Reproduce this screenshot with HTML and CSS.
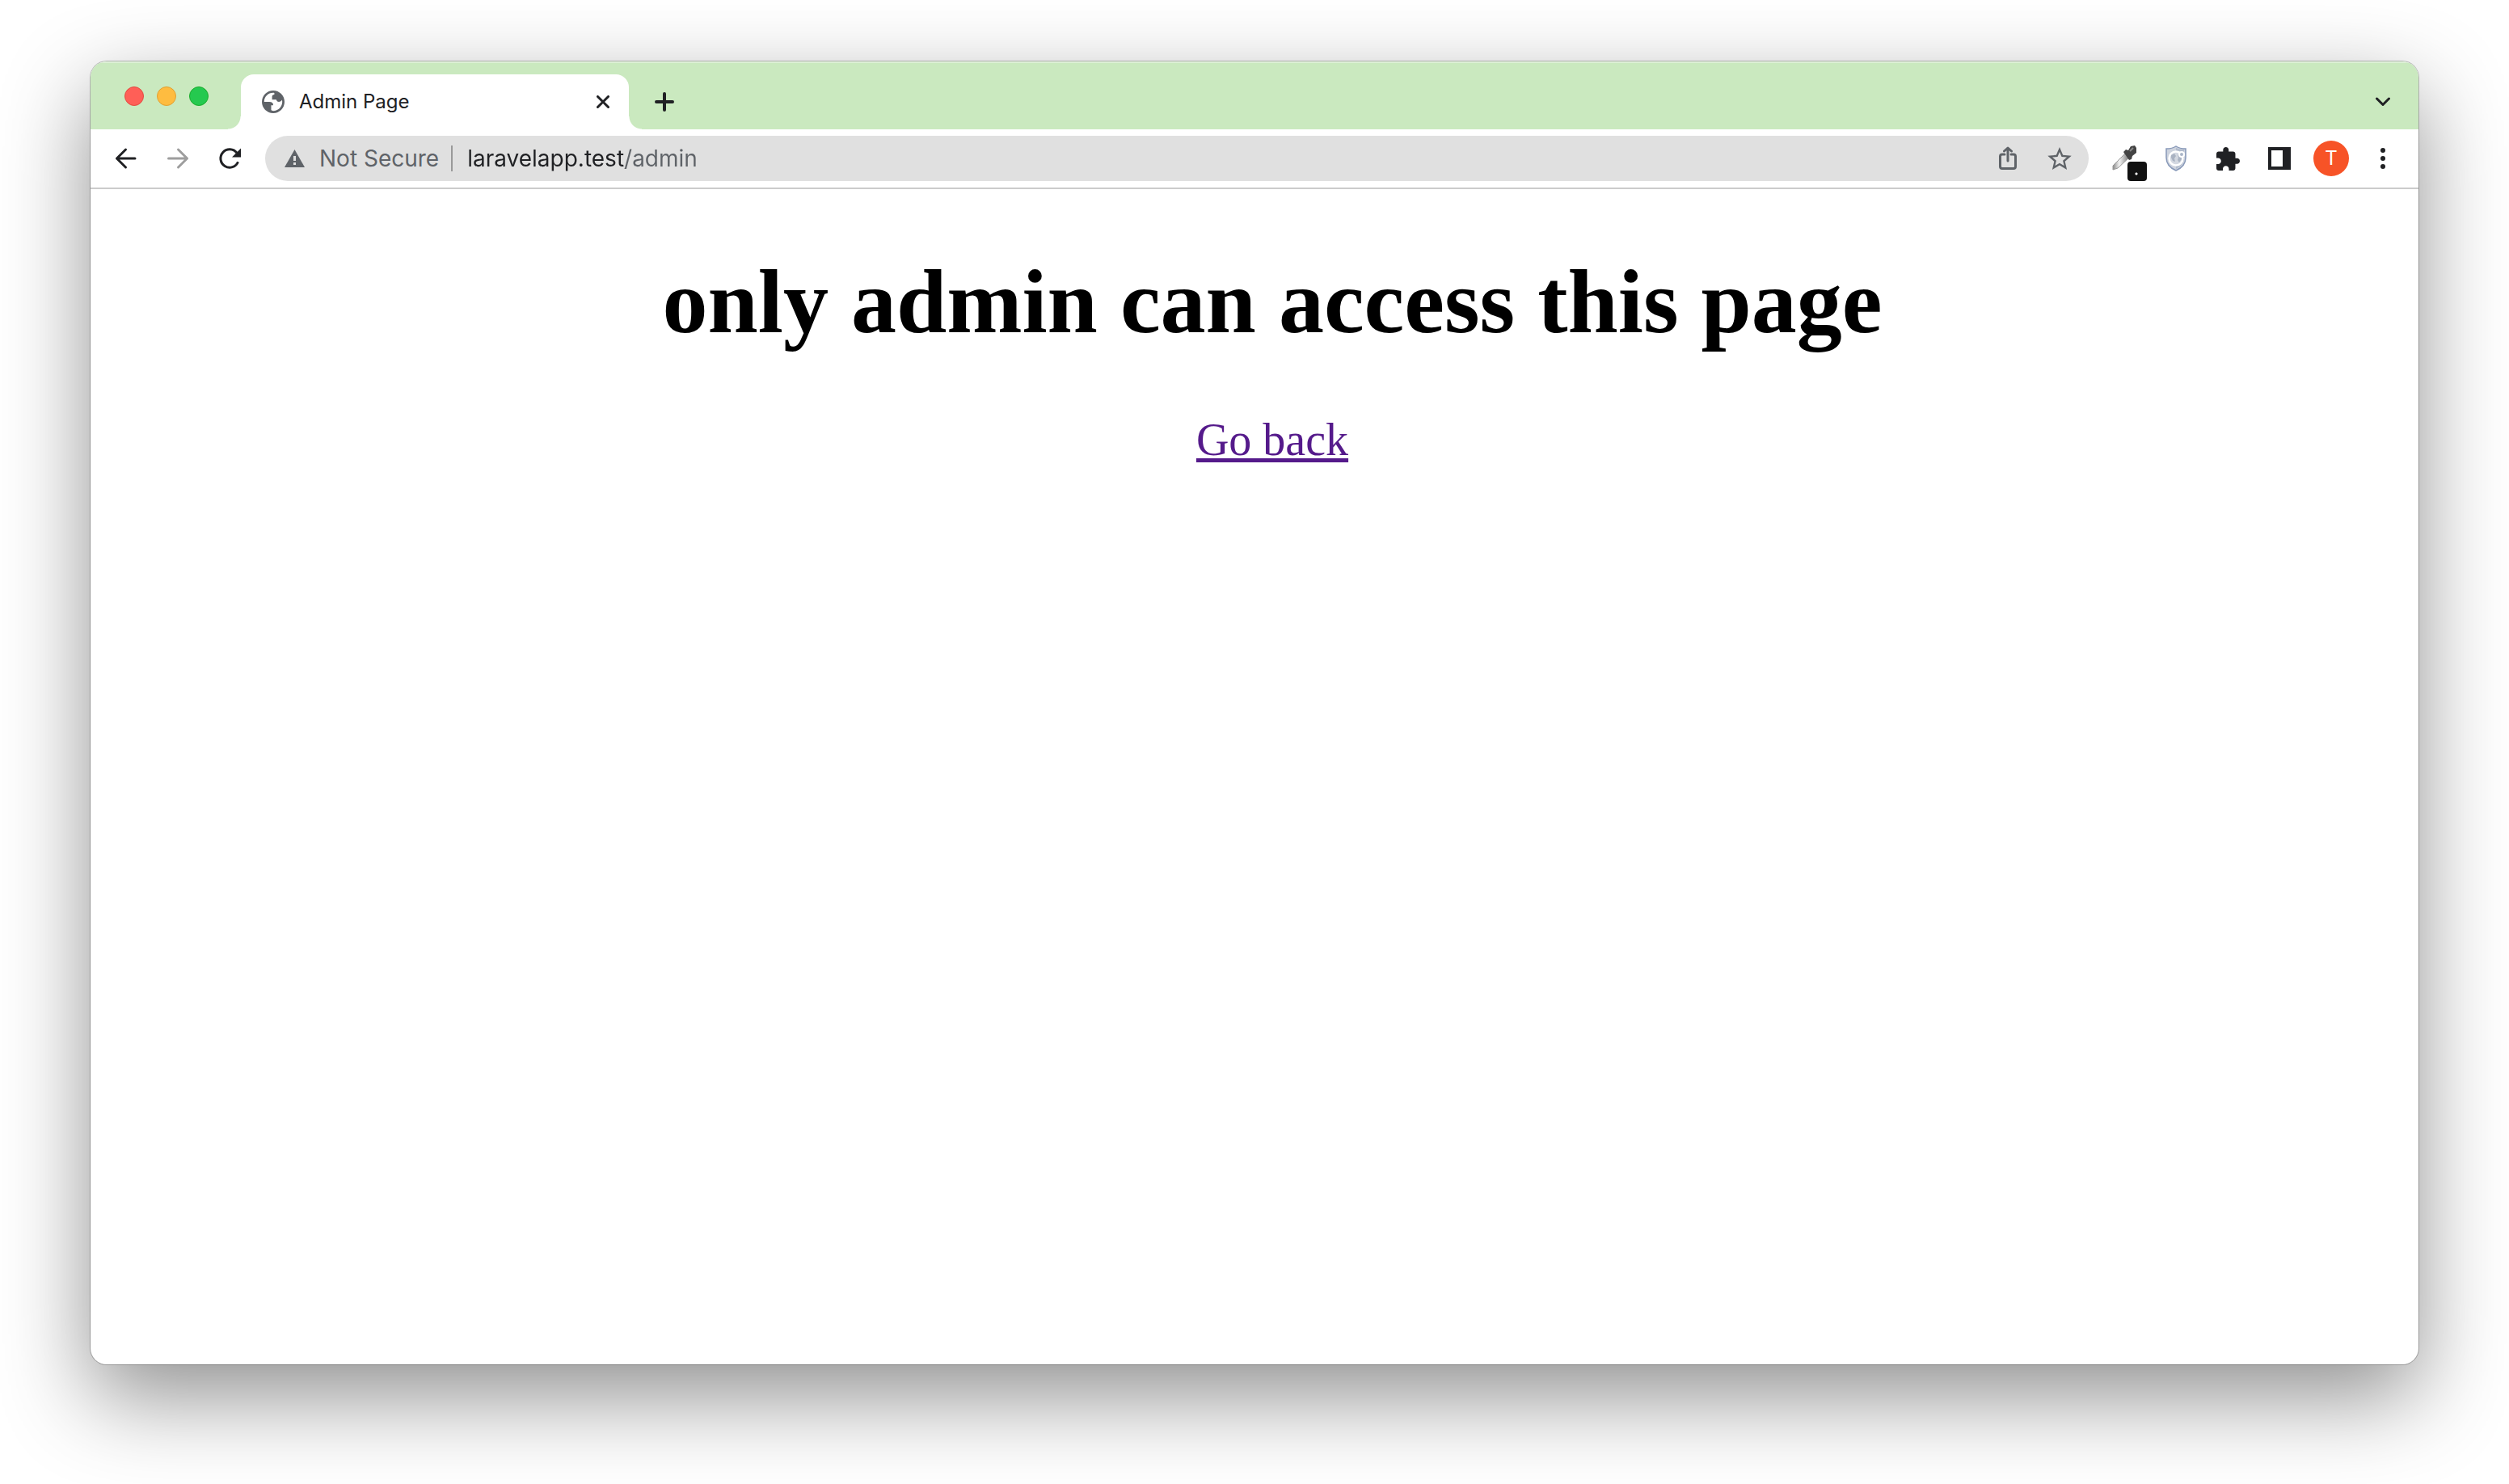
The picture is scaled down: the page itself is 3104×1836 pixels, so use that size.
FILE: index.html
```html
<!DOCTYPE html>
<html lang="en">
<head>
<meta charset="utf-8">
<title>Admin Page</title>
<link rel="stylesheet" href="styles.css">
</head>
<body>
<div class="window">
  <header class="tab-strip">
    <div class="lights">
      <button class="light light-close" aria-label="Close window"></button>
      <button class="light light-min" aria-label="Minimise window"></button>
      <button class="light light-max" aria-label="Maximise window"></button>
    </div>
    <div class="tab">
      <svg class="tab-globe" viewBox="2 2 20 20" width="28" height="28" aria-hidden="true"><path fill="#5f6368" d="M12 2C6.480 2 2 6.480 2 12s4.480 10 10 10 10-4.480 10-10S17.520 2 12 2z"/><path fill="#fff" d="M4 12h4.500c2.500 0 3.700 1.200 3.500 3h-1.800v4.300c.5.300 1.100.5 1.800.7 4.400 0 8-3.600 8-8 0-.6-.1-1.200-.2-1.700-.5 1.100-1.600 1.700-2.800 1.700-1.300 0-2-.7-2.300-1.900H11V7.500c0-1.100.7-1.900 2-1.900V4.100C8.300 3.500 4 7 4 12z"/></svg>
      <span class="tab-title">Admin Page</span>
      <button class="icon-button tab-close" aria-label="Close tab"><svg viewBox="0 0 16 16" width="16" height="16"><path class="stroke" stroke-width="3" d="M1.500 1.500l13 13M14.500 1.500l-13 13"/></svg></button>
    </div>
    <button class="icon-button new-tab" aria-label="New tab"><svg viewBox="0 0 24 24" width="24" height="24"><path class="stroke" stroke-width="4" d="M12 2v20M2 12h20"/></svg></button>
    <button class="icon-button tab-search" aria-label="Search tabs"><svg viewBox="0 0 20 12" width="20" height="12"><path class="stroke" stroke-width="3" d="M2.500 2l7.500 7.500L17.500 2"/></svg></button>
  </header>

  <nav class="toolbar" aria-label="Navigation">
    <div class="buttons">
      <button class="icon-button" aria-label="Back"><svg viewBox="0 0 28 28" width="28" height="28"><path class="stroke" stroke-width="3" d="M25 14H2.500M13.500 3l-11 11 11 11"/></svg></button>
      <button class="icon-button dim" aria-label="Forward"><svg viewBox="0 0 28 28" width="28" height="28"><path class="stroke" stroke-width="3" d="M2.500 14h23M14.500 3l11 11-11 11"/></svg></button>
      <button class="icon-button" aria-label="Reload"><svg viewBox="0 0 28 28" width="28" height="28"><path class="stroke butt" stroke-width="3" d="M24.500 18.200A11.200 11.200 0 1 1 23 7.200"/><path fill="#202124" d="M28 1.500V12.500H17z"/></svg></button>
    </div>
    <div class="omnibox">
      <svg class="warning" viewBox="0 0 25 22" width="25" height="22" aria-hidden="true"><path fill="#5f6368" d="M12.500 0L25 22H0z"/><path stroke="#e0e0e0" stroke-width="3" d="M12.500 8v6M12.500 16v3"/></svg>
      <span class="security">Not Secure</span>
      <input class="address" type="text" value="laravelapp.test/admin" aria-label="Address" spellcheck="false">
      <button class="icon-button" aria-label="Share"><svg viewBox="0 0 24 30" width="24" height="30"><path class="stroke grey" stroke-width="3" d="M8 10H5a2.500 2.500 0 0 0-2.500 2.500V25A2.500 2.500 0 0 0 5 27.500h14a2.500 2.500 0 0 0 2.500-2.500V12.500A2.500 2.500 0 0 0 19 10h-3M12 18V3M7.500 6L12 2l4.500 4"/></svg></button>
      <button class="icon-button" aria-label="Bookmark"><svg viewBox="2 2 20 19" width="30" height="28"><path fill="#5f6368" d="M22 9.240l-7.190-.62L12 2 9.190 8.630 2 9.240l5.460 4.730L5.820 21 12 17.270 18.180 21l-1.630-7.030L22 9.240zM12 15.400l-3.760 2.270 1-4.280-3.320-2.880 4.380-.38L12 6.100l1.710 4.040 4.380.38-3.320 2.880 1 4.280L12 15.400z"/></svg></button>
    </div>
    <div class="buttons">
      <button class="icon-button picker" aria-label="Colour picker">
        <svg viewBox="0 0 32 32" width="32" height="32"><defs><linearGradient id="glass"><stop offset="0" stop-color="#888"/><stop offset=".4" stop-color="#f4f4f4"/><stop offset="1" stop-color="#777"/></linearGradient></defs><path fill="url(#glass)" stroke="#999" d="M17 10l5 5L8 28l-6 2 0-5z"/><path fill="#444" d="M15 8l3-3 3 1 3-5 5-1 2 3v6l-5 4-1 4-3 1z"/><path stroke="#888" stroke-width="2" d="M23 7l4-4"/></svg>
        <span class="picker-badge"></span>
      </button>
      <button class="icon-button" aria-label="Shield extension"><svg viewBox="0 0 26 32" width="26" height="32"><path fill="#cdd3de" stroke="#8798b8" stroke-width="1.500" d="M13 1c3 2 7 3 12 3v11c0 8-5 13-12 16C6 28 1 23 1 15V4c5 0 9-1 12-3z"/><path fill="#b2bccd" d="M13 3v26c6-3 10-7 10-14V5c-4 0-7-.7-10-2z"/><circle cx="13" cy="16" r="8.500" fill="#d3d8e1" stroke="#fff" stroke-width="2.500"/><path fill="#aab3c2" d="M7 12l4-2 2 3-2 3 1 4-3-1-2-4zM15 11l4 2 1 4-3 4-2-3 1-3z"/><circle cx="20" cy="11" r="3" fill="#aab5c8" stroke="#fff" stroke-width="2"/></svg></button>
      <button class="icon-button" aria-label="Extensions"><svg viewBox="2 1 21 21" width="29" height="29"><path fill="#202124" d="M20.500 11H19V7c0-1.100-.9-2-2-2h-4V3.500C13 2.120 11.880 1 10.500 1S8 2.120 8 3.500V5H4c-1.100 0-1.990.9-1.990 2v3.800H3.500c1.490 0 2.700 1.210 2.700 2.700s-1.210 2.700-2.700 2.700H2V20c0 1.100.9 2 2 2h3.800v-1.500c0-1.490 1.210-2.700 2.700-2.700 1.490 0 2.700 1.210 2.700 2.700V22H17c1.100 0 2-.9 2-2v-4h1.500c1.380 0 2.500-1.120 2.500-2.500S21.880 11 20.500 11z"/></svg></button>
      <button class="icon-button" aria-label="Side panel"><svg viewBox="0 0 28 28" width="28" height="28"><path fill="#202124" fill-rule="evenodd" d="M0 0h28v28H0zM4 4v20h14V4z"/></svg></button>
      <button class="icon-button" aria-label="Profile"><span class="avatar">T</span></button>
      <button class="icon-button" aria-label="Menu"><svg viewBox="0 0 6 26" width="6" height="26"><g fill="#202124"><circle cx="3" cy="3" r="3"/><circle cx="3" cy="13" r="3"/><circle cx="3" cy="23" r="3"/></g></svg></button>
    </div>
  </nav>

  <main class="page">
    <h1 class="page-title">only admin can access this page</h1>
    <p class="page-back"><a class="back-link" href="#">Go back</a></p>
  </main>
</div>
</body>
</html>
```
FILE: styles.css
```css
* {
  box-sizing: border-box;
}

body {
  display: flex;
  min-height: 100vh;
  margin: 0;
  padding: 76px 112px 148px;
  background: #fff;
  font-family: Inter, "Liberation Sans", sans-serif;
  color: #202124;
}

button {
  padding: 0;
  border: 0;
  background: none;
  font: inherit;
  color: inherit;
}

svg {
  display: block;
}

.window {
  display: flex;
  flex: 1;
  flex-direction: column;
  min-width: 0;
  overflow: hidden;
  border-radius: 20px;
  background: #fff;
  box-shadow: 0 0 0 1px rgba(0, 0, 0, 0.24), 0 40px 110px rgba(0, 0, 0, 0.44);
}

/* Tab strip */

.tab-strip {
  display: flex;
  align-items: flex-end;
  height: 84px;
  padding: 0 16px 0 42px;
  background: #cae9bf;
  box-shadow: inset 0 2px 0 rgba(255, 255, 255, 0.35);
}

.lights {
  display: flex;
  gap: 16px;
  margin-right: 40px;
  padding-bottom: 29px;
}

.light {
  width: 24px;
  height: 24px;
  border: 1px solid;
  border-radius: 50%;
}

.light-close {
  border-color: #e24b41;
  background: #ff5f57;
}

.light-min {
  border-color: #e1a032;
  background: #febc40;
}

.light-max {
  border-color: #1bac2c;
  background: #25c94f;
}

.tab {
  position: relative;
  display: flex;
  align-items: center;
  width: 480px;
  height: 68px;
  padding: 0 4px 0 26px;
  border-radius: 16px 16px 0 0;
  background: #fff;
}

/* Curved feet where the tab meets the toolbar */
.tab::before,
.tab::after {
  content: "";
  position: absolute;
  bottom: 0;
  width: 16px;
  height: 16px;
}

.tab::before {
  right: 100%;
  background: radial-gradient(circle at 0 0, transparent 15px, #fff 16px);
}

.tab::after {
  left: 100%;
  background: radial-gradient(circle at 100% 0, transparent 15px, #fff 16px);
}

.tab-title {
  flex: 1;
  padding-left: 18px;
  font-size: 24px;
  line-height: 32px;
}

.icon-button {
  display: flex;
  flex: none;
  align-items: center;
  justify-content: center;
  width: 56px;
  height: 56px;
}

.new-tab,
.tab-search {
  height: 68px;
}

.new-tab {
  margin-left: 16px;
}

.tab-search {
  margin-left: auto;
}

.stroke {
  fill: none;
  stroke: #202124;
  stroke-linecap: round;
  stroke-linejoin: round;
}

.butt {
  stroke-linecap: butt;
}

.grey {
  stroke: #5f6368;
}

.dim .stroke {
  stroke: #9e9e9e;
}

/* Toolbar */

.toolbar {
  display: flex;
  align-items: center;
  gap: 16px;
  height: 74px;
  padding: 0 16px;
  border-bottom: 2px solid #cbcbcb;
}

.buttons {
  display: flex;
  flex: none;
  gap: 8px;
}

.omnibox {
  display: flex;
  flex: 1;
  align-items: center;
  gap: 8px;
  min-width: 0;
  height: 56px;
  padding: 0 8px 0 24px;
  border-radius: 28px;
  background: #e0e0e0;
  font-size: 28px;
  line-height: 32px;
}

.warning {
  flex: none;
}

.security {
  flex: none;
  margin-right: 4px;
  padding: 0 15px 0 10px;
  border-right: 2px solid #999;
  color: #5f6368;
}

/* The host is drawn darker than the path that follows it */
.address {
  flex: 1;
  min-width: 0;
  height: 40px;
  padding: 0 0 0 6px;
  border: 0;
  outline: 0;
  background: linear-gradient(to right, #202124 201px, #5f6368 201px);
  -webkit-background-clip: text;
  background-clip: text;
  font: inherit;
  color: #202124;
  -webkit-text-fill-color: transparent;
}

.picker {
  position: relative;
}

.picker-badge {
  position: absolute;
  right: 0;
  bottom: 0;
  width: 24px;
  height: 24px;
  border-radius: 4px;
  background: radial-gradient(circle at 11px 15px, #fff 1px, #111 2px);
}

.avatar {
  width: 44px;
  height: 44px;
  border-radius: 50%;
  background: #f75327;
  font-size: 24px;
  line-height: 44px;
  color: #fff;
}

/* Page content */

.page {
  flex: 1;
  padding: 75px 0 0 44px;
  font-family: "Liberation Serif", serif;
  text-align: center;
  color: #000;
}

.page-title {
  margin: 0 0 75px;
  font-size: 112px;
  line-height: 128px;
}

.page-back {
  margin: 0;
  font-size: 56px;
  line-height: 64px;
}

.back-link {
  color: #551a8b;
  text-decoration-thickness: 5px;
  text-underline-offset: 4px;
}
```
